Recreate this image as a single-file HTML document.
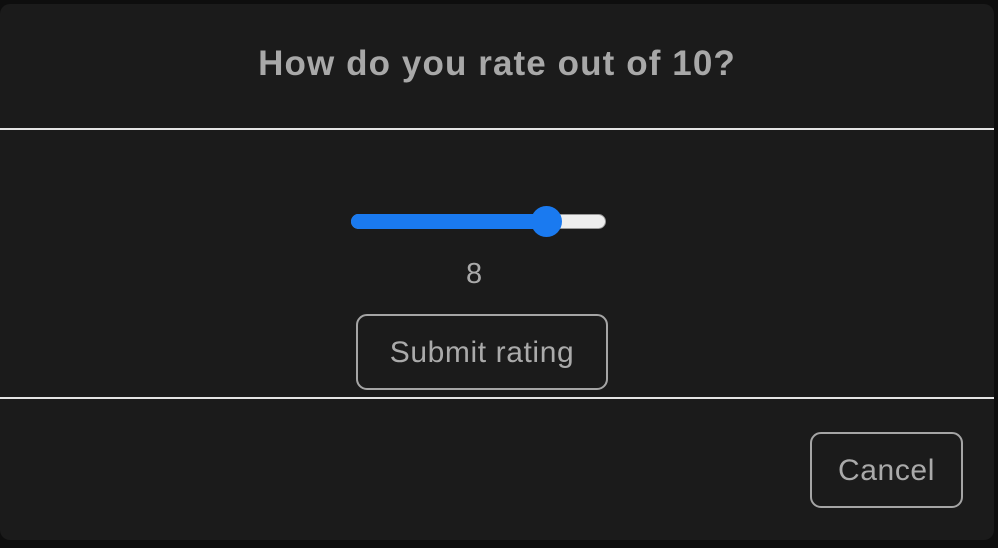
<!DOCTYPE html>
<html><head><style>
body{margin:0;width:998px;height:548px;background:#0e0e0e;overflow:hidden;font-family:"Liberation Sans",sans-serif;position:relative}
.d{position:absolute;left:0;top:4px;width:994px;height:536px;background:#1b1b1b;border-radius:10px}
.t{position:absolute;left:0;width:994px;top:44px;text-align:center;color:#a8a8a8;font-size:35px;font-weight:bold;letter-spacing:1.1px}
.ln{position:absolute;left:0;width:994px;height:2px;background:#e4e4e4}
.trk{position:absolute;left:351px;top:214px;width:255px;height:15px;border-radius:8px;background:#eee;border:1px solid #999;box-sizing:border-box}
.fill{position:absolute;left:351px;top:214px;width:196px;height:15px;border-radius:8px 0 0 8px;background:#1a7af0}
.th{position:absolute;left:531px;top:206px;width:31px;height:31px;border-radius:50%;background:#1a7af0}
.v{position:absolute;left:466px;top:258px;color:#aaa;font-size:29px}
.b{position:absolute;border:2px solid #a5a5a5;border-radius:11px;box-sizing:border-box;color:#aaa;font-size:30px;letter-spacing:0.6px;text-align:center}
</style></head><body>
<div class="d"></div>
<div class="t">How do you rate out of 10?</div>
<div class="ln" style="top:128px"></div>
<div class="trk"></div><div class="fill"></div><div class="th"></div>
<div class="v">8</div>
<div class="b" style="left:356px;top:314px;width:252px;height:76px;line-height:74px">Submit rating</div>
<div class="ln" style="top:397px"></div>
<div class="b" style="left:810px;top:432px;width:153px;height:76px;line-height:74px">Cancel</div>
</body></html>
